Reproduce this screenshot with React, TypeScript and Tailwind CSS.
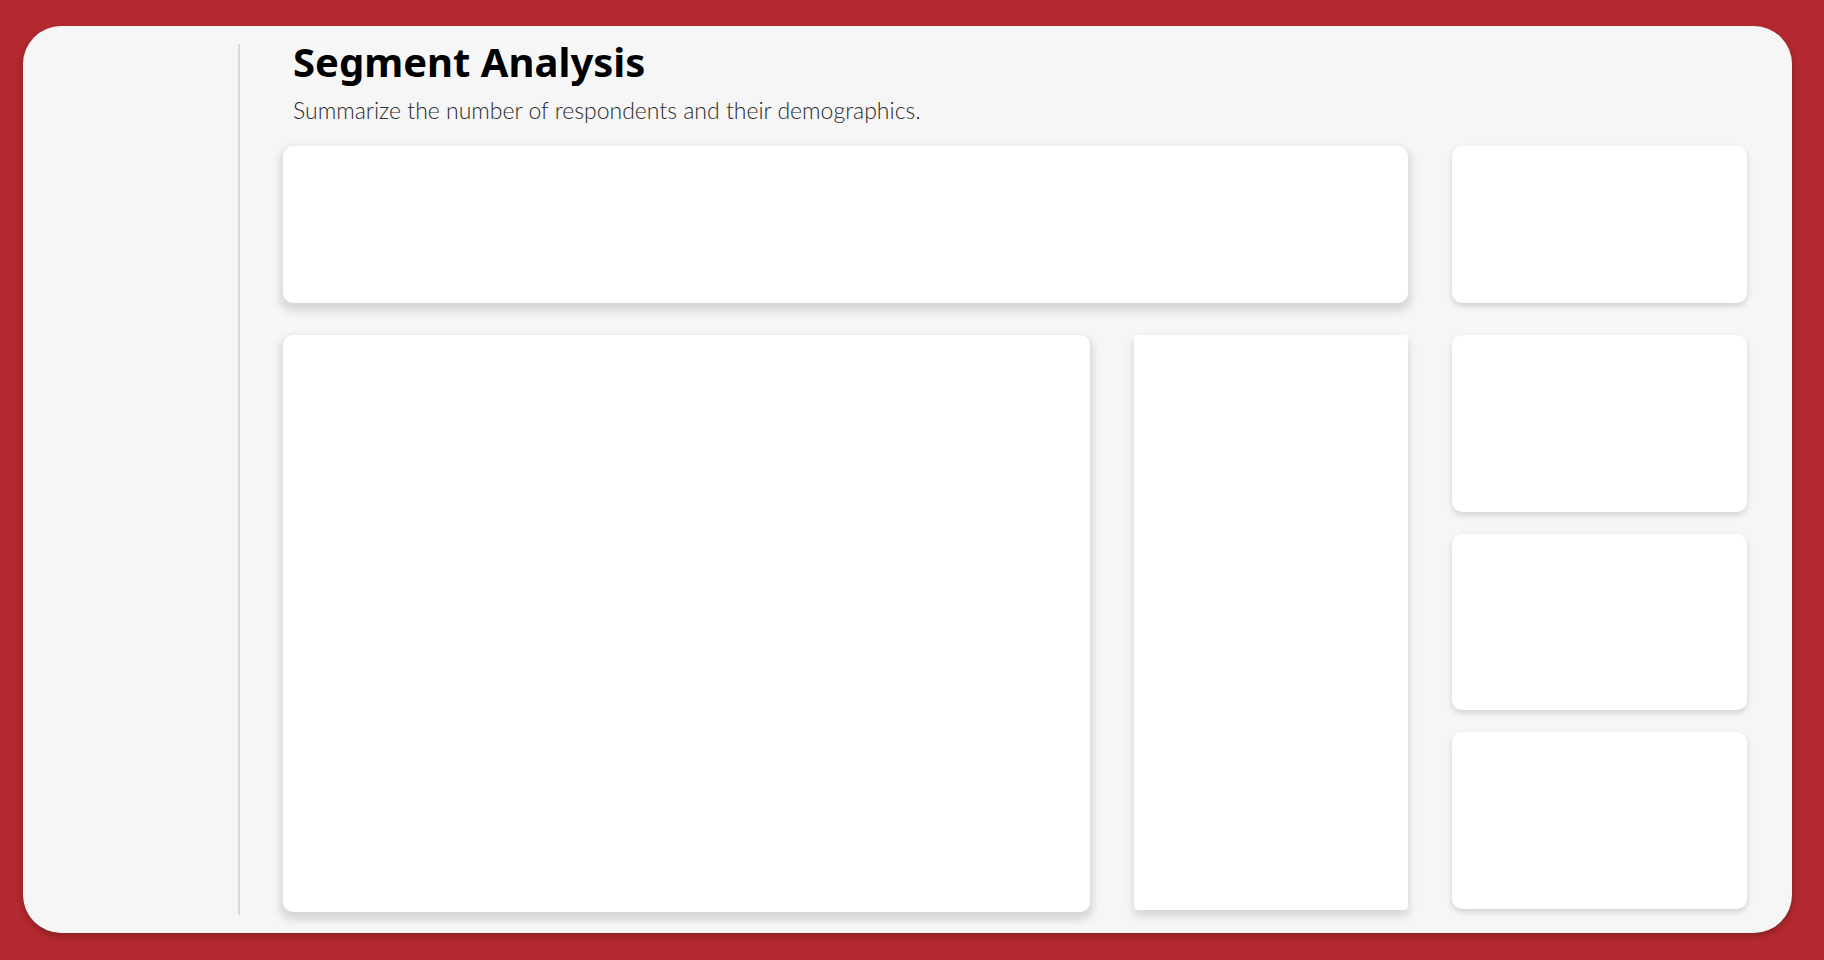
export default function App() {
  return (
    <div className="h-screen w-full bg-[#b3292f] pt-[26px] pl-[23px] pr-[32px] pb-[27px]">
      <div className="flex h-full rounded-[38px] bg-[#f6f6f6] shadow-[0_3px_6px_rgba(0,0,0,0.25)]">
        {/* sidebar */}
        <div className="w-[215px] shrink-0" />
        <div className="my-[18px] w-[2px] shrink-0 bg-[#d9d9d9]" />

        {/* main */}
        <div className="flex flex-1 flex-col pl-[43px] pr-[45px] pb-[21px]">
          <div className="pl-[10px] pt-[12px]">
            <h1 className="text-[40px] font-bold leading-[48px] text-black [font-family:'Noto_Sans',sans-serif]">
              Segment Analysis
            </h1>
            <p className="mt-[10px] text-[23px] font-light leading-[28px] text-[#2a2a2a] [font-family:Lato,sans-serif]">
              Summarize the number of respondents and their demographics.
            </p>
          </div>

          <div className="mt-[22px] grid flex-1 grid-cols-[807px_274px_295px] grid-rows-[157px_1fr] gap-x-[44px] gap-y-[32px]">
            <div className="col-span-2 rounded-[10px] bg-white shadow-[0_5px_9px_3px_rgba(0,0,0,0.13)]" />
            <div className="rounded-[10px] bg-white shadow-[0_3px_6px_rgba(0,0,0,0.15)]" />

            <div className="rounded-[10px] bg-white shadow-[0_5px_9px_3px_rgba(0,0,0,0.13)]" />
            <div className="mb-[2px] rounded-[4px] bg-white shadow-[0_5px_8px_1px_rgba(0,0,0,0.13)]" />
            <div className="mb-[3px] flex flex-col gap-[22px]">
              <div className="flex-1 rounded-[10px] bg-white shadow-[0_3px_6px_rgba(0,0,0,0.15)]" />
              <div className="flex-1 rounded-[10px] bg-white shadow-[0_3px_6px_rgba(0,0,0,0.15)]" />
              <div className="flex-1 rounded-[10px] bg-white shadow-[0_3px_6px_rgba(0,0,0,0.15)]" />
            </div>
          </div>
        </div>
      </div>
    </div>
  );
}
